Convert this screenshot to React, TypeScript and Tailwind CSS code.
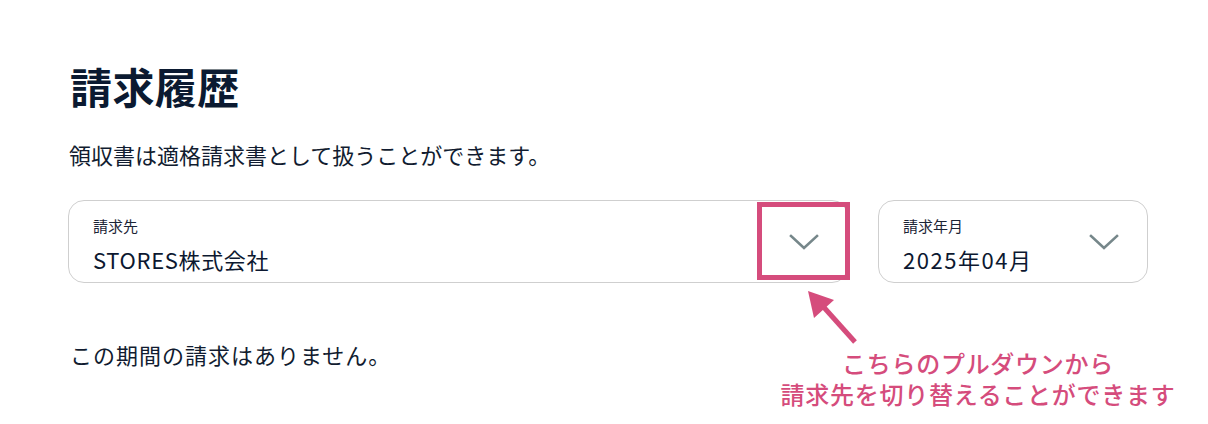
import { ReactNode } from 'react';

const font = { fontFamily: '"Noto Sans CJK JP", "Noto Sans", sans-serif' };

function Chevron() {
  return (
    <svg width="30" height="16" viewBox="0 0 30 16" fill="none" aria-hidden="true">
      <path d="M2 2 L15 14 L28 2" stroke="#76878a" strokeWidth="2.6" strokeLinecap="square" strokeLinejoin="miter" />
    </svg>
  );
}

function SelectBox({ label, value, className, valueClass, children }: { label: string; value: string; className: string; valueClass: string; children?: ReactNode }) {
  return (
    <div className={`relative flex h-[83px] shrink-0 items-center justify-between rounded-2xl border border-[#cfcfcf] bg-white pl-[24px] pr-7 ${className}`}>
      <div className="flex flex-col self-start pt-[15px]">
        <span className="text-[15px] leading-[20px] text-[#1c2536]">{label}</span>
        <span className={`mt-[8px] text-[22px] leading-[30px] text-[#0c1830] ${valueClass}`}>{value}</span>
      </div>
      <Chevron />
      {children}
    </div>
  );
}

export default function App() {
  return (
    <div className="relative h-[424px] w-[1208px] overflow-hidden bg-white" style={font}>
      <div className="flex flex-col pl-[68px] pt-[58px]">
        <h1 className="ml-[2px] text-[42px] font-bold leading-[56px] tracking-[0.01em] text-[#0b1a31]">請求履歴</h1>
        <p className="ml-[1px] mt-[24px] text-[22px] leading-[32px] text-[#111c30]">
          領収書は適格請求書として扱うことができます。
        </p>
        <div className="mt-[30px] flex gap-[30px]">
          <SelectBox label="請求先" value="STORES株式会社" className="w-[780px]" valueClass="tracking-[0.03em]">
            <div className="pointer-events-none absolute right-[-3px] top-[1px] h-[78px] w-[93px] border-[5px] border-[#d54c7c]" />
          </SelectBox>
          <SelectBox label="請求年月" value="2025年04月" className="w-[270px]" valueClass="tracking-[0.07em]" />
        </div>
        <p className="ml-[2px] mt-[55px] text-[22px] leading-[32px] tracking-[0.045em] text-[#111c30]">
          この期間の請求はありません。
        </p>
      </div>

      <svg className="absolute left-[800px] top-[284px]" width="64" height="64" viewBox="0 0 64 64" aria-hidden="true">
        <line x1="55" y1="58" x2="20" y2="19" stroke="#d54c7c" strokeWidth="5" />
        <polygon points="8,7 34,16 14,34" fill="#d54c7c" />
      </svg>

      <div className="absolute left-[770px] top-[347px] flex w-[416px] flex-col items-center text-[24px] font-medium leading-[31px] tracking-[0.03em] text-[#d54c7c]">
        <span>こちらのプルダウンから</span>
        <span>請求先を切り替えることができます</span>
      </div>
    </div>
  );
}
